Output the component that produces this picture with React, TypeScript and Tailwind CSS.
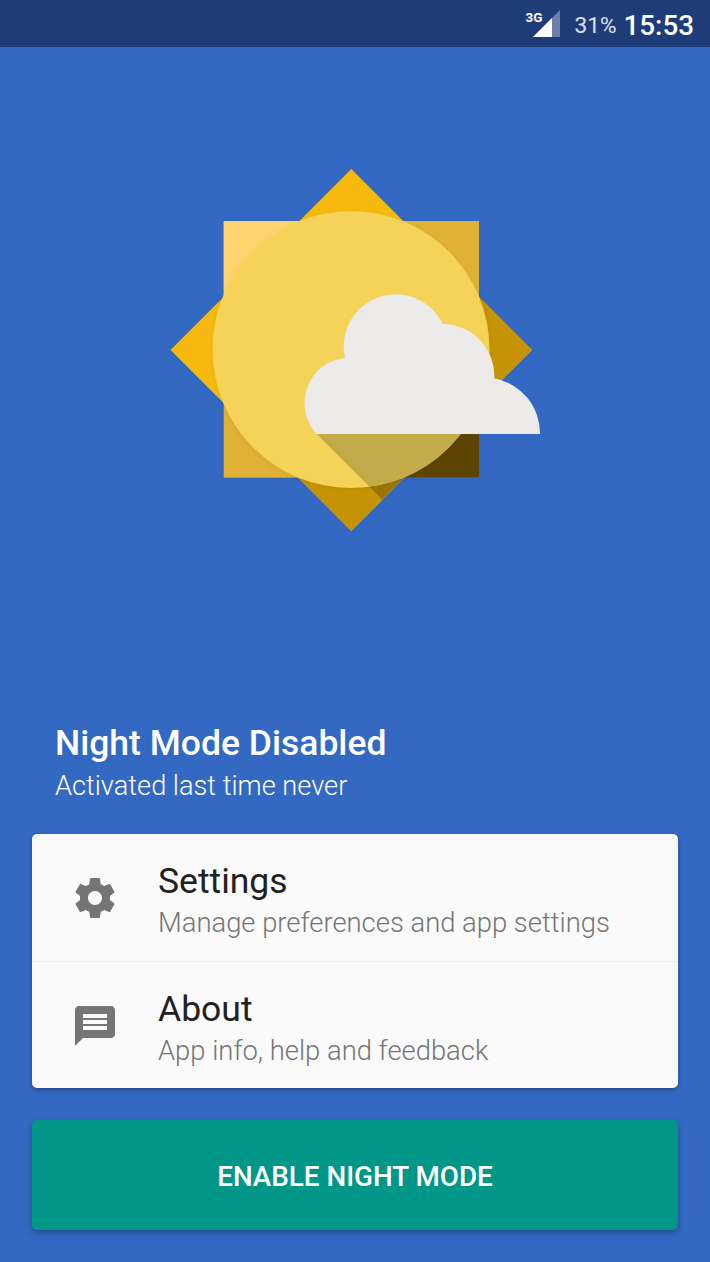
const roboto = "font-['Roboto',sans-serif]";

const DIAMOND = "M351.3 169 L532 350 L351.3 531 L170.6 350 Z";
const CAST = "M316.7 434 H540 V600 H482.7 Z";

/* ---------- Sun + cloud logo (viewBox keeps screen coordinates) ---------- */
function Logo() {
  const cloud =
    "M316.7 434 A 45.6 45.6 0 0 1 345 357.7 A 52 52 0 0 1 442.7 324 A 52 52 0 0 1 494.3 378.3 A 56 56 0 0 1 540 434 Z";
  return (
    <svg width="390" height="380" viewBox="160 160 390 380" className="block">
      <defs>
        <clipPath id="clip-diamond">
          <path d={DIAMOND} />
        </clipPath>
        <clipPath id="clip-square">
          <rect x="223.7" y="221" width="255.3" height="256.7" />
        </clipPath>
        <clipPath id="clip-circle">
          <circle cx="351" cy="349.5" r="138.5" />
        </clipPath>
        <filter id="soft" x="-10%" y="-10%" width="120%" height="120%">
          <feDropShadow dx="0" dy="1" stdDeviation="2" floodColor="#000" floodOpacity="0.07" />
        </filter>
      </defs>
      <g filter="url(#soft)">
        <path d={DIAMOND} fill="#f6b90b" />
      </g>
      <path d="M441.6 259.5 L532 350 L351.3 531 L261 440.5 Z" fill="#c59305" />
      <path d={CAST} fill="#9c7504" clipPath="url(#clip-diamond)" />
      <g filter="url(#soft)">
        <rect x="223.7" y="221" width="255.3" height="256.7" fill="#dfb136" />
      </g>
      <path d="M223.7 221 H351 L223.7 349 Z" fill="#fed46f" />
      <path d={CAST} fill="#5c4405" clipPath="url(#clip-square)" />
      <g filter="url(#soft)">
        <circle cx="351" cy="349.5" r="138.5" fill="#f4d359" />
      </g>
      <path d={CAST} fill="#c3ab4a" clipPath="url(#clip-circle)" />
      <path d={cloud} fill="#ecebe9" />
    </svg>
  );
}

function SignalIcon() {
  return (
    <svg width="27" height="27" viewBox="0 0 27 27" className="block">
      <path d="M0 27 L27 0 V27 Z" fill="#ffffff" fillOpacity="0.35" />
      <path d="M0 27 L19 8 V27 Z" fill="#ffffff" />
    </svg>
  );
}

function MenuRow({ icon, title, sub }: { icon: string; title: string; sub: string }) {
  return (
    <div className="flex h-[127px] items-center pl-[39px]">
      <svg width="48" height="48" viewBox="0 0 24 24" className="shrink-0 fill-[#757575]">
        <path d={icon} />
      </svg>
      <div className="ml-[39px] min-w-0 pt-[5px]">
        <div className="text-[35.5px] leading-[46px] text-[#212121]">{title}</div>
        <div className="text-[27.4px] leading-[38px] font-light whitespace-nowrap text-[#757575]">{sub}</div>
      </div>
    </div>
  );
}

const GEAR =
  "M19.43 12.98c.04-.32.07-.64.07-.98s-.03-.66-.07-.98l2.11-1.65c.19-.15.24-.42.12-.64l-2-3.46c-.12-.22-.39-.3-.61-.22l-2.49 1c-.52-.4-1.08-.73-1.69-.98l-.38-2.65C14.46 2.18 14.25 2 14 2h-4c-.25 0-.46.18-.49.42l-.38 2.65c-.61.25-1.17.59-1.69.98l-2.49-1c-.23-.09-.49 0-.61.22l-2 3.46c-.13.22-.07.49.12.64l2.11 1.65c-.04.32-.07.65-.07.98s.03.66.07.98l-2.11 1.65c-.19.15-.24.42-.12.64l2 3.46c.12.22.39.3.61.22l2.49-1c.52.4 1.08.73 1.69.98l.38 2.65c.03.24.24.42.49.42h4c.25 0 .46-.18.49-.42l.38-2.65c.61-.25 1.17-.59 1.69-.98l2.49 1c.23.09.49 0 .61-.22l2-3.46c.12-.22.07-.49-.12-.64l-2.11-1.65zM12 15.5c-1.93 0-3.5-1.57-3.5-3.5s1.57-3.5 3.5-3.5 3.5 1.57 3.5 3.5-1.57 3.5-3.5 3.5z";
const MESSAGE =
  "M20 2H4c-1.1 0-1.99.9-1.99 2L2 22l4-4h14c1.1 0 2-.9 2-2V4c0-1.1-.9-2-2-2zm-2 12H6v-2h12v2zm0-3H6V9h12v2zm0-3H6V6h12v2z";

export default function App() {
  return (
    <div className={`h-[1262px] w-[710px] overflow-hidden bg-[#3369c3] ${roboto}`}>
      {/* status bar */}
      <div className="flex h-[47px] items-center justify-end bg-[#1e3d78] pr-[16px] text-white">
        <div className="relative mr-[15px] h-[27px] w-[27px]">
          <SignalIcon />
          <span className="absolute left-[-7px] top-[0px] text-[13.5px] leading-[15px] font-bold">3G</span>
        </div>
        <span className="mr-[7px] mt-[5px] text-[22.6px] leading-none text-white/85">31%</span>
        <span className="mt-[5px] text-[27.8px] leading-none font-medium">15:53</span>
      </div>

      {/* logo */}
      <div className="pl-[160px] pt-[113px]">
        <Logo />
      </div>

      {/* state */}
      <div className="pl-[55px] pt-[182px] text-white">
        <div className="text-[35.5px] leading-[42px] font-medium">Night Mode Disabled</div>
        <div className="text-[27.2px] leading-[44px] font-light">Activated last time never</div>
      </div>

      {/* menu */}
      <div className="mx-[32px] mt-[26px] h-[254px] rounded-[5px] bg-[#fafafa] shadow-[0_2px_4px_rgba(0,0,0,0.3)]">
        <MenuRow icon={GEAR} title="Settings" sub="Manage preferences and app settings" />
        <div className="h-px bg-[#eeeeee]" />
        <MenuRow icon={MESSAGE} title="About" sub="App info, help and feedback" />
      </div>

      <div className="mx-[32px] mt-[32px] flex h-[110px] items-center justify-center rounded-[5px] bg-[#009688] pt-[4px] text-[27.8px] font-medium text-white shadow-[0_3px_6px_rgba(0,0,0,0.3)]">
        ENABLE NIGHT MODE
      </div>
    </div>
  );
}
